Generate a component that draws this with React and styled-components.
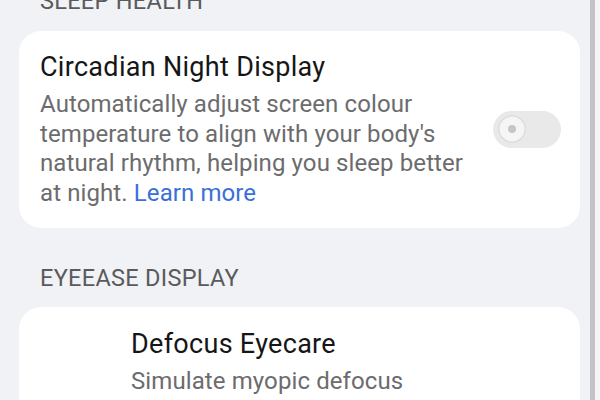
import React from 'react';
import styled, { createGlobalStyle } from 'styled-components';

const GlobalStyle = createGlobalStyle`
  html, body {
    margin: 0;
    padding: 0;
    background: #f1f2f6;
    overflow: hidden;
  }
  body {
    font-family: Roboto, "Noto Sans", sans-serif;
  }
`;

const Screen = styled.div`
  width: 600px;
  height: 400px;
  display: flex;
  overflow: hidden;
  background: #f1f2f6;
`;

const Content = styled.div`
  flex: 1;
  padding: 0 10px 0 19px;
  margin-top: -14px;
  display: flex;
  flex-direction: column;
`;

const ScrollRail = styled.div`
  width: 10px;
  display: flex;
  background: #f6f6f8;
`;

const ScrollThumb = styled.div`
  width: 5px;
  background: #c3c3c8;
`;

const SectionHeading = styled.div`
  font-size: 23.5px;
  line-height: 30px;
  letter-spacing: 0.3px;
  color: #5a5a5c;
  text-transform: uppercase;
  padding-left: 21px;
  margin-top: ${(p) => p.$top || 0}px;
  margin-bottom: ${(p) => p.$bottom || 15}px;
`;

const Card = styled.div`
  background: #ffffff;
  border-radius: 22px;
  display: flex;
  align-items: ${(p) => p.$align || 'center'};
  gap: 22px;
  padding: ${(p) => p.$padding};
`;

const Thumb = styled.div`
  width: 69px;
  height: 120px;
  flex-shrink: 0;
`;

const TextBlock = styled.div`
  flex: 1;
  display: flex;
  flex-direction: column;
  gap: 6px;
  max-width: ${(p) => p.$max || 'none'};
`;

const Title = styled.div`
  font-size: 27px;
  line-height: 34px;
  font-weight: 400;
  letter-spacing: 0.3px;
  color: #161616;
`;

const Description = styled.div`
  font-size: 24px;
  line-height: 29.5px;
  letter-spacing: 0.1px;
  color: #6c6c6e;
`;

const Link = styled.a`
  color: #3b6fd8;
  text-decoration: none;
`;

const Toggle = styled.div`
  width: 68px;
  height: 37px;
  border-radius: 19px;
  background: #e9e9ea;
  flex-shrink: 0;
  display: flex;
  align-items: center;
  padding-left: 5px;
  box-sizing: border-box;
`;

const Knob = styled.div`
  width: 28px;
  height: 28px;
  border-radius: 50%;
  background: #f5f5f5;
  box-shadow: inset 0 0 0 1.5px #dcdcdc;
  display: flex;
  align-items: center;
  justify-content: center;
  &::after {
    content: "";
    width: 8px;
    height: 8px;
    border-radius: 50%;
    background: #c6c6c8;
  }
`;

export default function App() {
  return (
    <>
      <GlobalStyle />
      <Screen>
        <Content>
          <SectionHeading $bottom={15}>Sleep Health</SectionHeading>
          <Card $padding="19px 19px 20px 21px">
            <TextBlock $max="438px">
              <Title>Circadian Night Display</Title>
              <Description>
                Automatically adjust screen colour temperature to align with your body's
                natural rhythm, helping you sleep better at night. <Link href="#">Learn more</Link>
              </Description>
            </TextBlock>
            <Toggle>
              <Knob />
            </Toggle>
          </Card>
          <SectionHeading $top={35} $bottom={14}>EyeEase Display</SectionHeading>
          <Card $padding="20px 19px 20px 21px" $align="flex-start">
            <Thumb />
            <TextBlock $max="290px">
              <Title>Defocus Eyecare</Title>
              <Description>
                Simulate myopic defocus so your overall vision relaxes.
              </Description>
            </TextBlock>
          </Card>
        </Content>
        <ScrollRail>
          <ScrollThumb />
        </ScrollRail>
      </Screen>
    </>
  );
}
